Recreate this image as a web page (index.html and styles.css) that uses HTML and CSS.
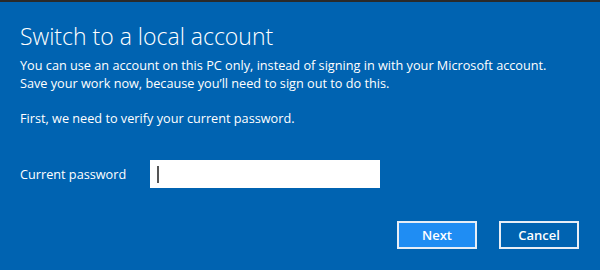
FILE: index.html
```html
<html>
<head>
<title>Switch to a local account</title>
<link rel="stylesheet" href="styles.css">
<meta http-equiv="Content-Type" content="text/html; charset=UTF-8" >
</head>
<body>
<div class="dialog">
  <div class="title-text">Switch to a local account</div>
  <div class="intro-text">You can use an account on this PC only, instead of signing in with your Microsoft account.<br>
Save your work now, because you&rsquo;ll need to sign out to do this.</div>
  <div class="intro-text verify-text">First, we need to verify your current password.</div>
  <div class="field-row">
    <div class="field-label">Current password</div>
    <div class="field-box"><span class="caret"></span></div>
  </div>
  <div class="button-row">
    <div class="button button-default">Next</div>
    <div class="button">Cancel</div>
  </div>
</div>
</body>
</html>
```

FILE: styles.css
```css
body {
 margin: 0;
 width: 600px;
 height: 270px;
 overflow: hidden;
 background-color: #0063b1;
 font-family: "Open Sans", "Noto Sans", Arial, sans-serif;
 color: #ffffff;
}
.dialog {
 height: 268px;
 border-top: 2px solid #2a2a2a;
 padding: 0 21px 0 20px;
 display: flex;
 flex-direction: column;
}
.title-text {
 font-size: 23px;
 font-weight: 300;
 margin-top: 18px;
 line-height: 32px;
}
.intro-text {
 font-size: 12.7px;
 line-height: 18px;
 margin-top: 4px;
}
.verify-text {
 margin-top: 17px;
}
.field-row {
 display: flex;
 align-items: center;
 margin-top: 33px;
}
.field-label {
 font-size: 12.7px;
 width: 130px;
}
.field-box {
 width: 230px;
 height: 28px;
 background-color: #ffffff;
 display: flex;
 align-items: center;
 padding-left: 7px;
 box-sizing: border-box;
}
.caret {
 width: 2px;
 height: 17px;
 background-color: #555555;
}
.button-row {
 display: flex;
 justify-content: flex-end;
 gap: 22px;
 margin-top: 33px;
}
.button {
 width: 80px;
 height: 28px;
 box-sizing: border-box;
 border: 2px solid #e8eef6;
 font-size: 13px;
 font-weight: 600;
 display: flex;
 align-items: center;
 justify-content: center;
}
.button-default {
 background-color: #1f8df3;
}
```
